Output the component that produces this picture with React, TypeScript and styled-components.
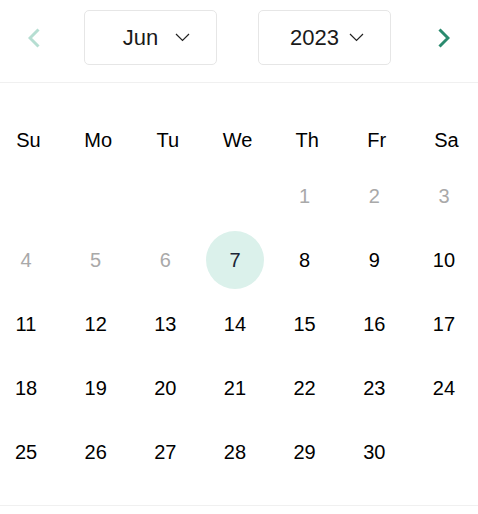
import React from "react"
import styled, { createGlobalStyle } from "styled-components"

const GlobalStyle = createGlobalStyle`
  html, body {
    margin: 0;
    padding: 0;
    background: #ffffff;
  }
  body {
    font-family: "Liberation Sans", Arial, sans-serif;
  }
`

const Calendar = styled.div`
  width: 478px;
  border-bottom: 1px solid #f0f0f0;
  background: #fff;
`

const Header = styled.div`
  display: flex;
  align-items: center;
  justify-content: space-between;
  padding: 10px 20px 17px;
  border-bottom: 1px solid #f0f0f0;
`

const NavButton = styled.button<{ $dim?: boolean }>`
  width: 28px;
  height: 55px;
  display: flex;
  align-items: center;
  justify-content: center;
  border: none;
  background: none;
  padding: 0;
  cursor: pointer;
  color: ${(p) => (p.$dim ? "#b6ded2" : "#2a8a6e")};
`

const Selects = styled.div`
  display: flex;
  gap: 41px;
  margin-right: 3px;
`

const SelectBox = styled.div`
  position: relative;
  width: 133px;
  height: 55px;
  box-sizing: border-box;
  border: 1px solid #e6e6e6;
  border-radius: 5px;
  display: flex;
  align-items: center;
  justify-content: center;
  padding-right: 20px;
  font-size: 22px;
  color: #1a1a1a;
`

const Caret = styled.svg`
  position: absolute;
  right: 26px;
  top: 22px;
`

const Body = styled.div`
  padding: 33px 0 21px;
`

const WeekRow = styled.div`
  display: grid;
  grid-template-columns: repeat(7, 52px);
  justify-content: space-between;
  padding: 0 5.5px 0 2.5px;
  height: 48px;
  align-items: center;
`

const WeekLabel = styled.div`
  text-align: center;
  font-size: 20px;
  color: #000;
`

const DayGrid = styled.div`
  display: grid;
  grid-template-columns: repeat(7, 52px);
  grid-auto-rows: 64px;
  justify-content: space-between;
  padding: 0 8px 0 0;
`

const DayCell = styled.div`
  display: flex;
  align-items: center;
  justify-content: center;
`

const DayNumber = styled.span<{ $muted?: boolean; $selected?: boolean }>`
  flex: none;
  width: 58px;
  height: 58px;
  border-radius: 50%;
  display: flex;
  align-items: center;
  justify-content: center;
  font-size: 20px;
  color: ${(p) => (p.$selected ? "#1c2536" : p.$muted ? "#a9a9a9" : "#000")};
  background: ${(p) => (p.$selected ? "#dbf1eb" : "transparent")};
`

const ChevronDown = () => (
  <Caret width="15" height="9" viewBox="0 0 15 9" fill="none">
    <path d="M1 1 L7.5 7.5 L14 1" stroke="#222" strokeWidth="1.2" />
  </Caret>
)

const weekdays = ["Su", "Mo", "Tu", "We", "Th", "Fr", "Sa"]

type Day = { n?: number; muted?: boolean; selected?: boolean }

const days: Day[] = [
  {}, {}, {}, {},
  { n: 1, muted: true }, { n: 2, muted: true }, { n: 3, muted: true },
  { n: 4, muted: true }, { n: 5, muted: true }, { n: 6, muted: true },
  { n: 7, selected: true },
  ...Array.from({ length: 23 }, (_, i) => ({ n: i + 8 })),
]

export default function App() {
  return (
    <>
      <GlobalStyle />
      <Calendar>
        <Header>
          <NavButton $dim aria-label="Previous month">
            <svg width="12" height="20" viewBox="0 0 12 20" fill="none">
              <path d="M10.5 1.5 L2 10 L10.5 18.5" stroke="currentColor" strokeWidth="3" />
            </svg>
          </NavButton>
          <Selects>
            <SelectBox>
              Jun
              <ChevronDown />
            </SelectBox>
            <SelectBox>
              2023
              <ChevronDown />
            </SelectBox>
          </Selects>
          <NavButton aria-label="Next month">
            <svg width="12" height="20" viewBox="0 0 12 20" fill="none">
              <path d="M1.5 1.5 L10 10 L1.5 18.5" stroke="currentColor" strokeWidth="3" />
            </svg>
          </NavButton>
        </Header>
        <Body>
          <WeekRow>
            {weekdays.map((w) => (
              <WeekLabel key={w}>{w}</WeekLabel>
            ))}
          </WeekRow>
          <DayGrid>
            {days.map((d, i) => (
              <DayCell key={i}>
                {d.n !== undefined && (
                  <DayNumber $muted={d.muted} $selected={d.selected}>
                    {d.n}
                  </DayNumber>
                )}
              </DayCell>
            ))}
          </DayGrid>
        </Body>
      </Calendar>
    </>
  )
}
